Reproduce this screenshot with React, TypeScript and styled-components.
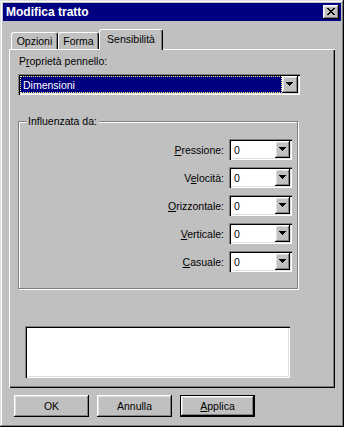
import { Fragment } from 'react'
import styled, { createGlobalStyle } from 'styled-components'

const GlobalStyle = createGlobalStyle`
  html, body {
    margin: 0;
    padding: 0;
    background: #c0c0c0;
  }
  body {
    font-family: "Liberation Sans", Arial, sans-serif;
    font-size: 10.5px;
    color: #000;
  }
`

const raised = `
  box-shadow: inset -1px -1px #000, inset 1px 1px #fff, inset -2px -2px #808080, inset 2px 2px #dfdfdf;
`
const sunken = `
  box-shadow: inset 1px 1px #808080, inset 2px 2px #000, inset -1px -1px #fff, inset -2px -2px #dfdfdf;
`

const Window = styled.div`
  box-sizing: border-box;
  width: 344px;
  height: 427px;
  padding: 3px;
  background: #c0c0c0;
  box-shadow: inset -1px -1px #000, inset 1px 1px #dfdfdf, inset -2px -2px #808080, inset 2px 2px #fff;
  display: flex;
  flex-direction: column;
`

const TitleBar = styled.div`
  height: 18px;
  background: #000080;
  display: flex;
  align-items: center;
  justify-content: space-between;
  padding: 0 2px 0 3px;
`

const Title = styled.span`
  color: #fff;
  font-weight: bold;
  font-size: 12px;
`

const CloseButton = styled.div`
  box-sizing: border-box;
  width: 16px;
  height: 14px;
  background: #c0c0c0;
  ${raised}
  display: flex;
  align-items: center;
  justify-content: center;
  padding: 0 1px 1px 0;
`

const Body = styled.div`
  flex: 1;
  display: flex;
  flex-direction: column;
  padding: 8px 6px 0;
`

const TabStrip = styled.div`
  display: flex;
  align-items: flex-end;
  height: 20px;
  padding-left: 2px;
`

const Tab = styled.div<{ $active?: boolean; $w: number }>`
  box-sizing: border-box;
  width: ${(p) => p.$w}px;
  height: ${(p) => (p.$active ? 21 : 17)}px;
  margin-bottom: ${(p) => (p.$active ? -1 : 0)}px;
  position: relative;
  z-index: ${(p) => (p.$active ? 1 : 0)};
  background: #c0c0c0;
  border-top: 1px solid #fff;
  border-left: 1px solid #fff;
  border-right: 1px solid #000;
  border-radius: 3px 3px 0 0;
  box-shadow: inset -1px 0 #808080;
  display: flex;
  align-items: center;
  justify-content: center;
  padding-bottom: ${(p) => (p.$active ? 2 : 0)}px;
`

const Panel = styled.div`
  box-sizing: border-box;
  height: 339px;
  padding: 6px 9px 0;
  background: #c0c0c0;
  box-shadow: inset 1px 1px #fff, inset -1px -1px #000, inset -2px -2px #808080;
  display: flex;
  flex-direction: column;
`

const FieldLabel = styled.div`
  line-height: 13px;
  padding-left: 1px;
  margin-bottom: 6px;
`

const Combo = styled.div<{ $w: number }>`
  box-sizing: border-box;
  width: ${(p) => p.$w}px;
  height: 21px;
  padding: 2px;
  background: #fff;
  ${sunken}
  display: flex;
`

const ComboValue = styled.div<{ $selected?: boolean }>`
  flex: 1;
  box-sizing: border-box;
  display: flex;
  align-items: center;
  padding-left: 2px;
  background: ${(p) => (p.$selected ? '#000080' : '#fff')};
  color: ${(p) => (p.$selected ? '#fff' : '#000')};
  border: 1px dotted ${(p) => (p.$selected ? '#ffff7f' : 'transparent')};
`

const DropButton = styled.div<{ $w: number }>`
  box-sizing: border-box;
  width: ${(p) => p.$w}px;
  height: 17px;
  background: #c0c0c0;
  ${raised}
  display: flex;
  align-items: center;
  justify-content: center;
  padding: 0 1px 1px 0;
`

const Group = styled.fieldset`
  box-sizing: border-box;
  width: 280px;
  margin: 20px 0 0;
  padding: 11px 5px 16px 0;
  border: 1px solid #808080;
  box-shadow: inset 1px 1px #fff, 1px 1px #fff;
`

const Legend = styled.legend`
  margin-left: 7px;
  padding: 0 2px;
  line-height: 13px;
  background: #c0c0c0;
  position: relative;
  z-index: 1;
`

const Rows = styled.div`
  display: grid;
  grid-template-columns: 1fr 63px;
  column-gap: 5px;
  row-gap: 7px;
`

const RowLabel = styled.div`
  justify-self: end;
  align-self: center;
`

const Preview = styled.div`
  box-sizing: border-box;
  width: 265px;
  height: 52px;
  margin: 37px 0 0 7px;
  background: #fff;
  ${sunken}
`

const ButtonRow = styled.div`
  display: flex;
  gap: 8px;
  padding: 7px 0 0 5px;
`

const Button = styled.div<{ $default?: boolean }>`
  box-sizing: border-box;
  width: 75px;
  height: 22px;
  background: #c0c0c0;
  display: flex;
  align-items: center;
  justify-content: center;
  box-shadow: ${(p) =>
    p.$default
      ? 'inset 0 0 0 1px #000, inset -2px -2px #000, inset 2px 2px #fff, inset -3px -3px #808080, inset 3px 3px #dfdfdf'
      : 'inset -1px -1px #000, inset 1px 1px #fff, inset -2px -2px #808080, inset 2px 2px #dfdfdf'};
`

const CloseIcon = () => (
  <svg width="8" height="7" viewBox="0 0 8 7" shapeRendering="crispEdges">
    <path
      fill="#000"
      d="M0 0h2v1h-2zM6 0h2v1h-2zM1 1h2v1h-2zM5 1h2v1h-2zM2 2h4v1h-4zM3 3h2v1h-2zM2 4h4v1h-4zM1 5h2v1h-2zM5 5h2v1h-2zM0 6h2v1h-2zM6 6h2v1h-2z"
    />
  </svg>
)

const Arrow = () => (
  <svg width="7" height="4" viewBox="0 0 7 4" shapeRendering="crispEdges">
    <path fill="#000" d="M0 0h7v1h-1v1h-1v1h-1v1h-1v-1h-1v-1h-1v-1h-1z" />
  </svg>
)

const rows: { label: string; key: number }[] = [
  { label: 'Pressione:', key: 0 },
  { label: 'Velocità:', key: 1 },
  { label: 'Orizzontale:', key: 0 },
  { label: 'Verticale:', key: 0 },
  { label: 'Casuale:', key: 0 },
]

const Mnemonic = ({ text, at }: { text: string; at: number }) => (
  <span>
    {text.slice(0, at)}
    <u>{text[at]}</u>
    {text.slice(at + 1)}
  </span>
)

export default function App() {
  return (
    <>
      <GlobalStyle />
      <Window>
        <TitleBar>
          <Title>Modifica tratto</Title>
          <CloseButton>
            <CloseIcon />
          </CloseButton>
        </TitleBar>
        <Body>
          <TabStrip>
            <Tab $w={47}>Opzioni</Tab>
            <Tab $w={41}>Forma</Tab>
            <Tab $w={64} $active>
              Sensibilità
            </Tab>
          </TabStrip>
          <Panel>
            <FieldLabel>
              <Mnemonic text="Proprietà pennello:" at={1} />
            </FieldLabel>
            <Combo $w={282}>
              <ComboValue $selected>Dimensioni</ComboValue>
              <DropButton $w={16}>
                <Arrow />
              </DropButton>
            </Combo>
            <Group>
              <Legend>Influenzata da:</Legend>
              <Rows>
                {rows.map((r) => (
                  <Fragment key={r.label}>
                    <RowLabel>
                      <Mnemonic text={r.label} at={r.key} />
                    </RowLabel>
                    <Combo $w={63}>
                      <ComboValue>0</ComboValue>
                      <DropButton $w={15}>
                        <Arrow />
                      </DropButton>
                    </Combo>
                  </Fragment>
                ))}
              </Rows>
            </Group>
            <Preview />
          </Panel>
          <ButtonRow>
            <Button>OK</Button>
            <Button>Annulla</Button>
            <Button $default>
              <Mnemonic text="Applica" at={0} />
            </Button>
          </ButtonRow>
        </Body>
      </Window>
    </>
  )
}
